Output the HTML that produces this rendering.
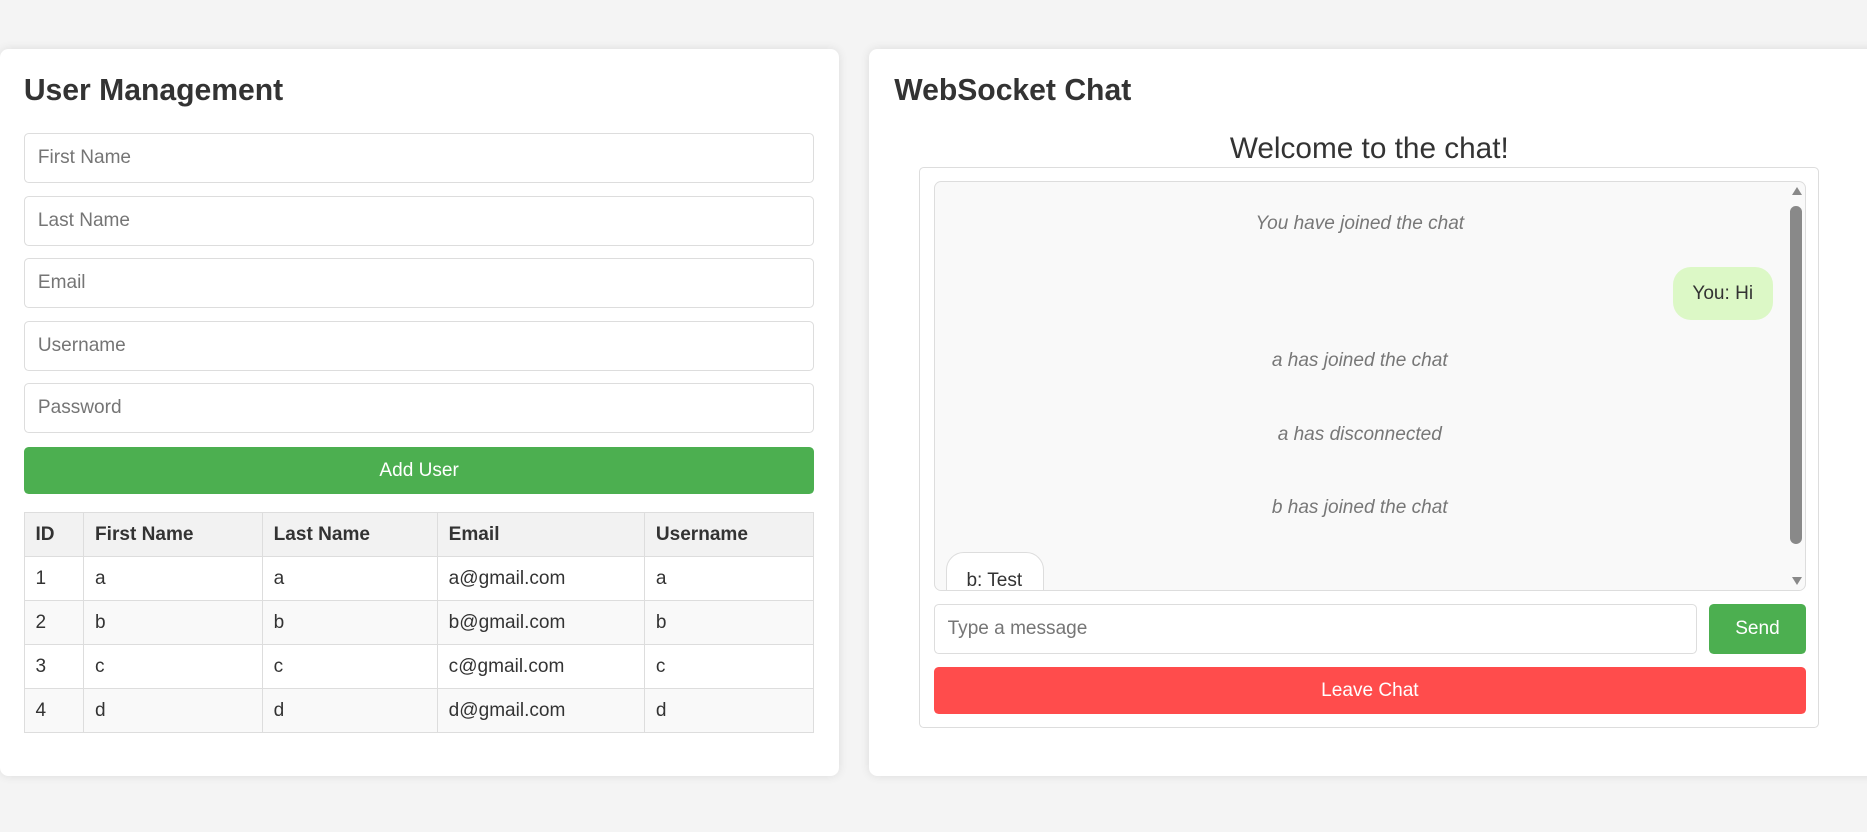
<!DOCTYPE html>
<html><head><style>
html,body{margin:0;padding:0;}
body{background:#f4f4f4;width:1867px;height:832px;overflow:hidden;font-family:"Liberation Sans",Arial,sans-serif;color:#333;}
#w{zoom:1.1907;position:relative;width:1568px;height:699px;}
.card{position:absolute;top:41px;height:611px;background:#fff;border-radius:7px;box-shadow:0 0 8px rgba(0,0,0,.1);}
h2{position:absolute;margin:0;font-size:25.3px;font-weight:bold;color:#333;top:62px;}
.inp{position:absolute;left:20px;border:1px solid #ddd;border-radius:4px;box-sizing:border-box;width:664px;height:42px;font-size:16px;color:#757575;padding-left:11px;line-height:40px;}
.btn{position:absolute;color:#fff;font-size:16px;text-align:center;border-radius:4px;}
table{position:absolute;left:20px;top:430px;width:664px;border-collapse:collapse;font-size:16px;}
td,th{border:1px solid #ddd;height:37px;padding:0 0 0 9px;text-align:left;box-sizing:border-box;}
th{background:#f2f2f2;font-weight:bold;}
tr:nth-child(odd) td{background:#f9f9f9;}
.sys{position:absolute;left:784px;width:716px;text-align:center;font-style:italic;color:#777;font-size:16px;}
</style></head><body><div id="w">
<div class="card" style="left:0;width:705px;"></div>
<div class="card" style="left:730px;width:860px;"></div>
<h2 style="left:20px;">User Management</h2>
<div class="inp" style="top:112px;">First Name</div>
<div class="inp" style="top:165px;">Last Name</div>
<div class="inp" style="top:217px;">Email</div>
<div class="inp" style="top:270px;">Username</div>
<div class="inp" style="top:322px;">Password</div>
<div class="btn" style="left:20px;top:375px;width:664px;height:40px;line-height:40px;background:#4caf50;">Add User</div>
<table>
<tr><th style="width:50px">ID</th><th style="width:150px">First Name</th><th style="width:147px">Last Name</th><th style="width:174px">Email</th><th>Username</th></tr>
<tr><td>1</td><td>a</td><td>a</td><td>a@gmail.com</td><td>a</td></tr>
<tr><td>2</td><td>b</td><td>b</td><td>b@gmail.com</td><td>b</td></tr>
<tr><td>3</td><td>c</td><td>c</td><td>c@gmail.com</td><td>c</td></tr>
<tr><td>4</td><td>d</td><td>d</td><td>d@gmail.com</td><td>d</td></tr>
</table>

<h2 style="left:751px;">WebSocket Chat</h2>
<div style="position:absolute;left:772px;width:756px;top:111px;text-align:center;font-size:25px;color:#333;">Welcome to the chat!</div>
<div style="position:absolute;left:772px;top:140px;width:756px;height:471px;border:1px solid #ddd;border-radius:4px;box-sizing:border-box;"></div>
<div style="position:absolute;left:784px;top:152px;width:733px;height:344px;border:1px solid #ddd;border-radius:6px;box-sizing:border-box;background:#f9f9f9;overflow:hidden;">
 <div style="position:absolute;right:3px;top:20px;width:10px;height:284px;background:#898989;border-radius:5px;"></div>
 <div style="position:absolute;right:3px;top:4px;width:0;height:0;border-left:5px solid transparent;border-right:5px solid transparent;border-bottom:7px solid #898989;"></div>
 <div style="position:absolute;right:3px;bottom:4px;width:0;height:0;border-left:5px solid transparent;border-right:5px solid transparent;border-top:7px solid #898989;"></div>
 <div style="position:absolute;left:620px;top:71px;width:84px;height:45px;background:#dcf8c6;border-radius:15px;line-height:45px;text-align:center;font-size:16px;">You: Hi</div>
 <div style="position:absolute;left:10px;top:311px;width:82px;height:50px;background:#fff;border:1px solid #ddd;border-radius:15px;box-sizing:border-box;padding:14px 0 0 16px;font-size:16px;">b: Test</div>
</div>
<div class="sys" style="top:179px;">You have joined the chat</div>
<div class="sys" style="top:294px;">a has joined the chat</div>
<div class="sys" style="top:356px;">a has disconnected</div>
<div class="sys" style="top:417px;">b has joined the chat</div>
<div class="inp" style="left:784px;top:507px;width:641px;">Type a message</div>
<div class="btn" style="left:1435px;top:507px;width:82px;height:42px;line-height:42px;background:#4caf50;">Send</div>
<div class="btn" style="left:784px;top:560px;width:733px;height:40px;line-height:40px;background:#ff4c4c;">Leave Chat</div>
</div></body></html>
